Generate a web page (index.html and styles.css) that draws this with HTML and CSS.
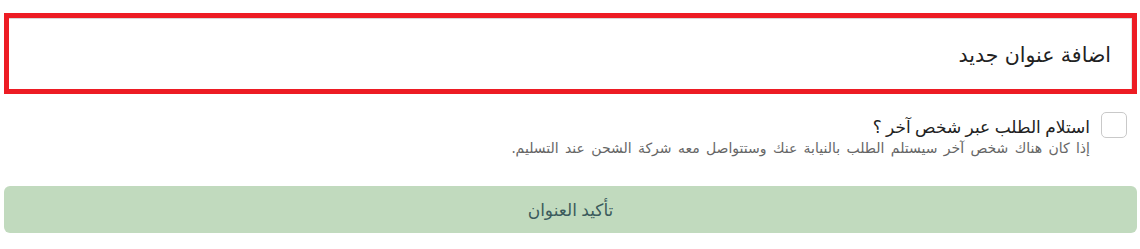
FILE: index.html
```html
<!DOCTYPE html>
<html lang="ar" dir="rtl">
<head>
    <meta charset="UTF-8">
    <meta name="viewport" content="width=device-width, initial-scale=1.0">
    <title>اضافة عنوان جديد</title>
    <link rel="stylesheet" href="styles.css">
</head>
<body>

<div class="container">
    <!-- New address header -->
    <div class="new-address">
        <h2>اضافة عنوان جديد</h2>
    </div>

    <!-- Someone else receives the order -->
    <label class="other-person">
        <input type="checkbox" id="otherPerson">
        <span class="check-box"></span>
        <span class="check-text">
            <span class="check-title">استلام الطلب عبر شخص آخر ؟</span>
            <span class="check-hint">إذا كان هناك شخص آخر سيستلم الطلب بالنيابة عنك وستتواصل معه شركة الشحن عند التسليم.</span>
        </span>
    </label>

    <button type="button" class="confirm-btn">تأكيد العنوان</button>
</div>

</body>
</html>
```

FILE: styles.css
```css
body {
    font-family: 'Noto Sans', 'DejaVu Sans', sans-serif;
    background-color: #ffffff;
    margin: 0;
    padding: 0;
}
.container {
    padding: 13px 3px 0 4px;
}
.new-address {
    border: 5px solid #ed1c24;
    height: 71px;
    display: flex;
    align-items: center;
    padding: 0 21px 0 20px;
    box-shadow: inset 0 1px 0 #d8d8d8, inset -1px 0 0 #e4e4e4;
}
.new-address h2 {
    margin: 0;
    font-size: 20.5px;
    font-weight: normal;
    color: #222;
    word-spacing: 1px;
}
.other-person {
    display: flex;
    align-items: flex-start;
    gap: 11px;
    margin: 18px 10px 0 0;
    cursor: pointer;
}
.other-person input {
    display: none;
}
.check-box {
    width: 24px;
    height: 24px;
    border: 1px solid #c9c9c9;
    border-radius: 5px;
    flex-shrink: 0;
}
.check-text {
    display: flex;
    flex-direction: column;
    padding-top: 4px;
}
.check-title {
    font-size: 17px;
    color: #222;
    line-height: 22px;
}
.check-hint {
    font-size: 14px;
    color: #666;
    line-height: 20px;
    word-spacing: 2.7px;
}
.confirm-btn {
    display: block;
    width: 100%;
    height: 47px;
    margin-top: 28px;
    background-color: #c1dabe;
    color: #3b5a5c;
    border: none;
    border-radius: 6px;
    font-family: 'Noto Sans', 'DejaVu Sans', sans-serif;
    font-size: 17px;
    cursor: pointer;
}
```
